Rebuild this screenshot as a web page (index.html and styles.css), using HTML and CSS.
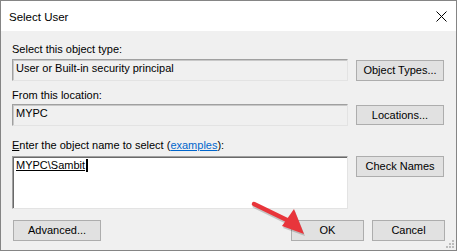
FILE: index.html
```html
<!DOCTYPE html>
<html lang="en">
<head>
  <meta charset="UTF-8" />
  <title>Select User</title>
  <link rel="stylesheet" href="styles.css">
</head>
<body>
<div class="win">
  <div class="titlebar">
    <span class="title">Select User</span>
    <svg class="close" width="11" height="11" viewBox="0 0 11 11"><path d="M0.5 0.5L10.5 10.5M10.5 0.5L0.5 10.5" stroke="#000" stroke-width="1"/></svg>
  </div>
  <div class="body">
    <div class="lbl l1">Select this object type:</div>
    <div class="row">
      <div class="field">User or Built-in security principal</div>
      <div class="btn b1">Object Types...</div>
    </div>
    <div class="lbl l2">From this location:</div>
    <div class="row">
      <div class="field">MYPC</div>
      <div class="btn b2">Locations...</div>
    </div>
    <div class="lbl l3"><u>E</u>nter the object name to select (<a href="#">examples</a>):</div>
    <div class="row">
      <div class="area"><span class="name">MYPC\Sambit</span><span class="caret"></span></div>
      <div class="btn">Check Names</div>
    </div>
    <div class="foot">
      <div class="btn">Advanced...</div>
      <div class="right">
        <div class="btn small">OK</div>
        <div class="btn small">Cancel</div>
      </div>
    </div>
  </div>
  <svg class="grip" width="8" height="8" viewBox="0 0 8 8">
    <rect x="6" y="0" width="2" height="2" fill="#bcbcbc"/>
    <rect x="3" y="3" width="2" height="2" fill="#bcbcbc"/>
    <rect x="6" y="3" width="2" height="2" fill="#bcbcbc"/>
    <rect x="0" y="6" width="2" height="2" fill="#bcbcbc"/>
    <rect x="3" y="6" width="2" height="2" fill="#bcbcbc"/>
    <rect x="6" y="6" width="2" height="2" fill="#bcbcbc"/>
  </svg>
  <!-- annotation arrow pointing at OK -->
  <svg class="arrow" width="70" height="45" viewBox="0 0 70 45">
    <path d="M5 6L40 23" stroke="rgba(0,0,0,.18)" stroke-width="5" stroke-linecap="round" transform="translate(1,2)"/>
    <path d="M33 28L45 11L55 36Z" fill="rgba(0,0,0,.18)" transform="translate(1,2)"/>
    <path d="M5 6L40 23" stroke="#e8353b" stroke-width="4.5" stroke-linecap="round"/>
    <path d="M33 28L45 11L55 36Z" fill="#e8353b"/>
  </svg>
</div>
</body>
</html>
```

FILE: styles.css
```css
body{margin:0;font-family:"Liberation Sans",Arial,sans-serif;font-size:11px;color:#000}
.win{position:relative;width:457px;height:251px;box-sizing:border-box;border:1px solid #858585;background:#f0f0f0;display:flex;flex-direction:column}
.titlebar{height:30px;background:#fff;display:flex;align-items:center;padding:0 9px 0 8px}
.title{font-size:11.5px;flex:1;padding-top:1px}
.close{margin-top:0}
.body{padding:0 11px 0 11px;flex:1}
.lbl{line-height:13px;height:13px}
.l1{margin-top:12px;margin-bottom:3px}
.l2{margin-top:8px;margin-bottom:2px}
.l3{margin-top:13px;margin-bottom:4px}
.lbl a{color:#0066cc}
.row{display:grid;grid-template-columns:336px 88px;column-gap:8px;align-items:start}
.field{height:22px;box-sizing:border-box;border:1px solid #a0a0a0;border-right-color:#e3e3e3;border-bottom-color:#e3e3e3;box-shadow:inset 1px 1px 0 #c8c8c8;padding:2px 3px;line-height:13px;background:#f0f0f0}
.area{height:53px;box-sizing:border-box;border:1px solid #a0a0a0;border-right-color:#e3e3e3;border-bottom-color:#e3e3e3;box-shadow:inset 1px 1px 0 #696969;background:#fff;padding:2px 3px;line-height:13px;display:flex;align-items:flex-start}
.name{text-decoration:underline}
.caret{width:2px;height:13px;background:#000;margin-left:1px}
.btn{height:21px;box-sizing:border-box;border:1px solid #adadad;background:#e1e1e1;display:flex;align-items:center;justify-content:center;line-height:13px}
.b1{margin-top:1px}
.b2{margin-top:1px;height:20px}
.foot{margin-top:11px;display:flex;justify-content:space-between;padding-left:1px}
.foot .btn{width:88px}
.right{display:flex;gap:8px}
.foot .small{width:73px}
.grip{position:absolute;right:2px;bottom:2px}
.arrow{position:absolute;left:248px;top:197px}
```
